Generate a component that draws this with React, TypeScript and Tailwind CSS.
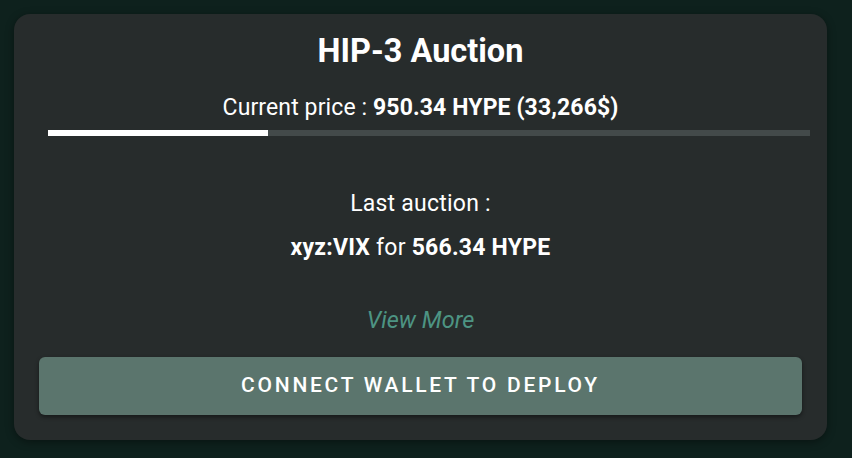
export default function App() {
  return (
    <div className="w-[852px] h-[458px] bg-[#0e211d] pt-[14px] pl-[14px]" style={{ fontFamily: "Roboto, 'Noto Sans', sans-serif" }}>
      <div className="w-[813px] h-[426px] rounded-[16px] bg-[#272c2c] shadow-[0_2px_8px_rgba(0,0,0,0.4)] flex flex-col items-center pt-[19px] px-[25px]">
        <h1 className="text-[32.5px] leading-[36px] font-bold text-white">HIP-3 Auction</h1>
        <p className="mt-[25px] text-[23px] leading-[28px] tracking-[0.005em] text-white">
          Current price : <span className="font-bold">950.34 HYPE (33,266$)</span>
        </p>
        <div className="mt-[8px] ml-[16px] w-[762px] h-[6px] bg-[#434a4a] flex">
          <div className="w-[220px] h-full bg-white" />
        </div>
        <p className="mt-[54px] text-[23px] leading-[28px] tracking-[0.01em] text-white">Last auction :</p>
        <p className="mt-[16px] text-[23px] leading-[28px] tracking-[0.01em] text-white">
          <span className="font-bold">xyz:VIX</span> for <span className="font-bold">566.34 HYPE</span>
        </p>
        <p className="mt-[44px] text-[23.5px] leading-[28px] italic text-[#4d9483]">View More</p>
        <button className="mt-[23px] w-full h-[58px] rounded-[6px] bg-[#5b756d] shadow-[0_2px_4px_rgba(0,0,0,0.45)] text-white text-[21px] font-medium tracking-[0.13em] uppercase">
          Connect wallet to deploy
        </button>
      </div>
    </div>
  );
}
